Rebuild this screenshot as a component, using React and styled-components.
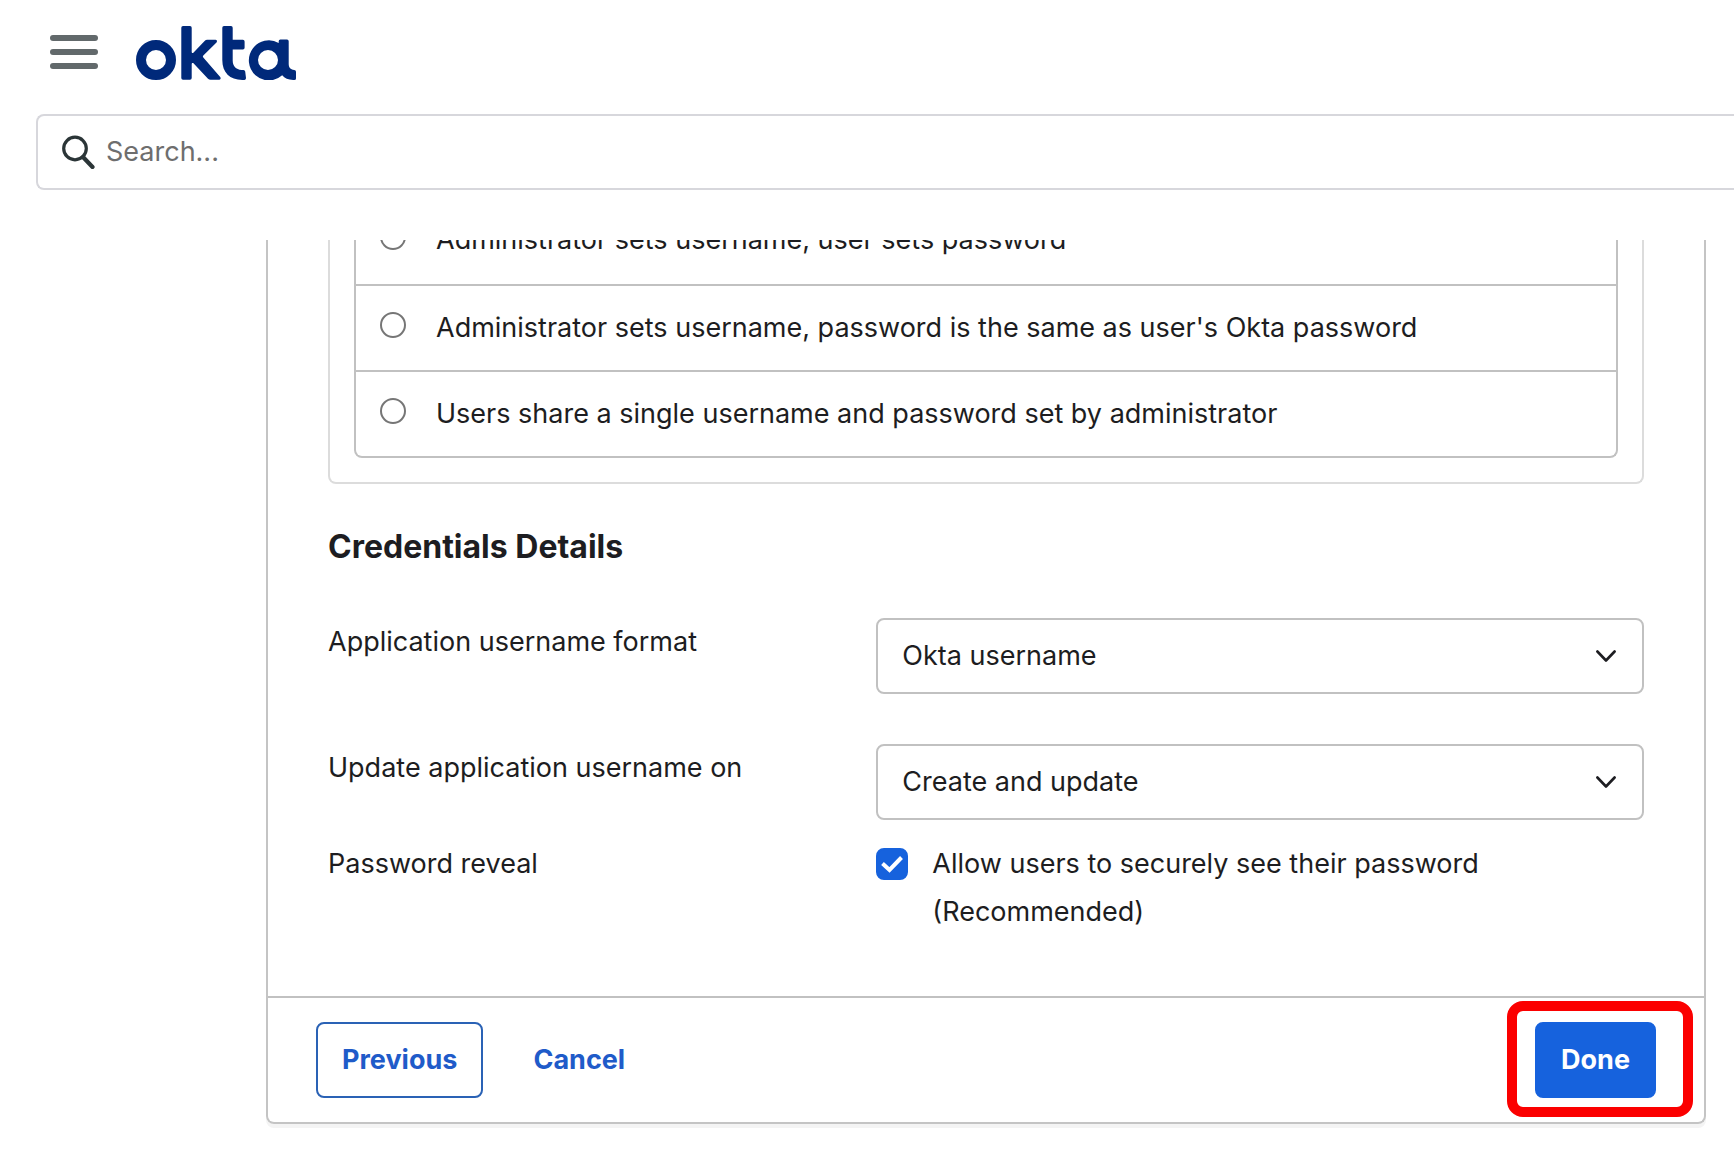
import React, { useState } from 'react';
import styled, { createGlobalStyle } from 'styled-components';

const GlobalStyle = createGlobalStyle`
  *,
  *::before,
  *::after {
    box-sizing: border-box;
  }

  body {
    margin: 0;
    background-color: #ffffff;
    color: #1d1d21;
    font-family: Inter, 'Liberation Sans', sans-serif;
    font-size: 27px;
    line-height: 48px;
  }

  button,
  input,
  select {
    font: inherit;
    color: inherit;
  }
`;

const TopBar = styled.header`
  display: flex;
  align-items: center;
  gap: 38px;
  padding: 26px 50px 34px;
`;

const MenuButton = styled.button`
  display: flex;
  padding: 0;
  border: none;
  background: none;
  cursor: pointer;
`;

const HomeLink = styled.a`
  display: flex;
`;

const SearchBar = styled.label`
  display: flex;
  align-items: center;
  gap: 11px;
  height: 76px;
  margin-left: 36px;
  padding-left: 24px;
  border: 2px solid #d7d7dc;
  border-right: none;
  border-radius: 8px 0 0 8px;
`;

const SearchInput = styled.input`
  flex: 1;
  min-width: 0;
  padding: 0;
  border: none;
  outline: none;
  background: none;

  &::placeholder {
    color: #6e6e6e;
    opacity: 1;
  }
`;

const ScrollArea = styled.main`
  margin-top: 50px;
  padding: 0 28px 40px 266px;
  overflow: hidden;
`;

const Panel = styled.form`
  margin-top: -42px;
  border: 2px solid #c4c4c4;
  border-top: none;
  border-radius: 0 0 8px 8px;
  box-shadow: 0 4px 0 #f4f4f4;
`;

const PanelBody = styled.div`
  padding: 0 60px 60px;
`;

const OptionGroup = styled.fieldset`
  margin: 0;
  padding: 0 24px 24px;
  border: 2px solid #dcdcdc;
  border-top: none;
  border-radius: 0 0 8px 8px;
`;

const OptionList = styled.div`
  border: 2px solid #c1c1c1;
  border-top: none;
  border-radius: 0 0 8px 8px;
`;

const Option = styled.label`
  display: flex;
  gap: 30px;
  padding: 18px 24px;

  &:first-child {
    padding-bottom: 20px;
  }

  & + & {
    border-top: 2px solid #c1c1c1;
  }
`;

const Radio = styled.input`
  appearance: none;
  flex: none;
  width: 26px;
  height: 26px;
  margin: 8px 0 0;
  border: 2px solid #767676;
  border-radius: 50%;
  background-color: #ffffff;

  &:checked {
    border-color: #1662dd;
    box-shadow: inset 0 0 0 4px #ffffff;
    background-color: #1662dd;
  }
`;

const SectionTitle = styled.h2`
  margin: 42px 0 50px;
  font-size: 32px;
  line-height: 42px;
  font-weight: 700;
`;

const Field = styled.div`
  display: grid;
  grid-template-columns: 5fr 7fr;
  align-items: start;
  margin-top: ${props => (props.$tight ? '20px' : '50px')};
`;

const SelectBox = styled.div`
  position: relative;

  svg {
    position: absolute;
    top: 32px;
    right: 28px;
    pointer-events: none;
  }
`;

const Select = styled.select`
  display: block;
  appearance: none;
  width: 100%;
  height: 76px;
  padding: 0 64px 0 24px;
  border: 2px solid #c1c1c1;
  border-radius: 8px;
  background-color: #ffffff;
`;

const CheckLabel = styled.label`
  display: flex;
  gap: 24px;
  padding-right: 140px;
`;

const CheckBox = styled.span`
  position: relative;
  flex: none;
  width: 32px;
  height: 32px;
  margin-top: 8px;

  svg {
    position: absolute;
    inset: 0;
    pointer-events: none;
  }
`;

const CheckInput = styled.input`
  display: block;
  appearance: none;
  width: 32px;
  height: 32px;
  margin: 0;
  border: 2px solid #8c8c96;
  border-radius: 8px;

  &:checked {
    border-color: #1662dd;
    background-color: #1662dd;
  }
`;

const Footer = styled.footer`
  display: flex;
  gap: 24px;
  padding: 24px 48px;
  border-top: 2px solid #c1c1c1;
`;

const Button = styled.button`
  height: 76px;
  padding: 0 24px;
  border: 2px solid transparent;
  border-radius: 8px;
  background-color: transparent;
  color: #1f5bc9;
  font-weight: 700;
  cursor: pointer;
`;

const OutlineButton = styled(Button)`
  border-color: #2a62b5;
`;

const PrimaryButton = styled(Button)`
  background-color: #1662dd;
  border-color: #1662dd;
  color: #ffffff;
`;

const Highlight = styled.div`
  position: relative;
  margin-left: auto;

  &::after {
    content: '';
    position: absolute;
    inset: -21px -37px -19px -28px;
    border: 10px solid #fb0000;
    border-radius: 16px;
    pointer-events: none;
  }
`;

const MenuIcon = () => (
  <svg width="48" height="36" viewBox="0 0 48 36" fill="#62696b" aria-hidden="true">
    <rect width="48" height="6" rx="3" />
    <rect y="14" width="48" height="6" rx="3" />
    <rect y="28" width="48" height="6" rx="3" />
  </svg>
);

const Logo = () => (
  <svg width="160" height="54" viewBox="0 0 160 54" fill="#00297a" role="img" aria-label="Okta">
    <circle cx="20" cy="34" r="15" fill="none" stroke="#00297a" strokeWidth="10" />
    <path d="M47 0h7q1.700 0 1.700 1.700v24c0 1.300 1 1.600 1.900 .7L68.600 15q1.100-1.200 2.700-1.200h8.200c1.500 0 2 1.600 1 2.600L67.300 29.600q-1 1 0 2L84.200 51c1 1.200.4 2.800-1.100 2.800h-8.500q-1.500 0-2.600-1.100L57.700 37.600c-.9-.9-2-.5-2 .8V52q0 1.800-1.700 1.800h-7q-1.700 0-1.700-1.800V1.700Q45.300 0 47 0z" />
    <path d="M88 0h7q1.700 0 1.700 1.700v12.100h10.200q1.700 0 1.700 1.700v6.300q0 1.700-1.700 1.700H96.700v11c0 5.600 3.300 9 8.800 9.500h2q1.500 0 1.700 1.500l.8 6.600q.2 1.800-1.500 1.800h-2.200C93.800 53.900 86.300 46.500 86.300 34V1.700Q86.300 0 88 0z" />
    <path d="M144.400 13.500h6.600q1.700 0 1.700 1.700v22.600c0 3.600 1.600 5.800 5.500 6.100q1.800.2 1.800 1.900v6.600q0 1.600-1.800 1.600c-5.600.1-9.400-1.400-12-4.700A20 20 0 1 1 142.700 17v-1.800q0-1.700 1.700-1.700zM132 24a10 10 0 1 0 0 20a10 10 0 0 0 0-20z" fillRule="evenodd" />
  </svg>
);

const SearchIcon = () => (
  <svg width="33" height="34" viewBox="0 0 33 34" fill="none" stroke="#2b3537" aria-hidden="true">
    <circle cx="13" cy="13.500" r="11.300" strokeWidth="3.200" />
    <path d="M21 22l9.500 10" strokeWidth="4.200" strokeLinecap="round" />
  </svg>
);

const ChevronIcon = () => (
  <svg width="20" height="13" viewBox="0 0 20 13" fill="none" stroke="#1d1d21" strokeWidth="2.600" strokeLinecap="round" strokeLinejoin="round" aria-hidden="true">
    <path d="M1.400 1.500L10 10.500l8.600-9" />
  </svg>
);

const CheckIcon = () => (
  <svg width="32" height="32" viewBox="0 0 32 32" fill="none" stroke="#ffffff" strokeWidth="4" aria-hidden="true">
    <path d="M6.500 15.500l7 6.500L25.500 9.500" />
  </svg>
);

const signOnOptions = [
  "Administrator sets username, user sets password",
  "Administrator sets username, password is the same as user's Okta password",
  "Users share a single username and password set by administrator"
];

const App = () => {
  const [signOn, setSignOn] = useState(null);
  const [reveal, setReveal] = useState(true);

  return (
    <>
      <GlobalStyle />
      <TopBar>
        <MenuButton type="button" aria-label="Menu">
          <MenuIcon />
        </MenuButton>
        <HomeLink href="#">
          <Logo />
        </HomeLink>
      </TopBar>

      <SearchBar>
        <SearchIcon />
        <SearchInput type="text" placeholder="Search..." aria-label="Search" />
      </SearchBar>

      <ScrollArea>
        <Panel onSubmit={e => e.preventDefault()}>
          <PanelBody>
            <OptionGroup>
              <OptionList>
                {signOnOptions.map((option, index) => (
                  <Option key={index}>
                    <Radio
                      type="radio"
                      name="signOn"
                      checked={signOn === index}
                      onChange={() => setSignOn(index)}
                    />
                    <span>{option}</span>
                  </Option>
                ))}
              </OptionList>
            </OptionGroup>

            <SectionTitle>Credentials Details</SectionTitle>

            <Field>
              <label htmlFor="username-format">Application username format</label>
              <SelectBox>
                <Select id="username-format">
                  <option>Okta username</option>
                </Select>
                <ChevronIcon />
              </SelectBox>
            </Field>

            <Field>
              <label htmlFor="update-on">Update application username on</label>
              <SelectBox>
                <Select id="update-on">
                  <option>Create and update</option>
                </Select>
                <ChevronIcon />
              </SelectBox>
            </Field>

            <Field $tight>
              <span>Password reveal</span>
              <CheckLabel>
                <CheckBox>
                  <CheckInput
                    type="checkbox"
                    checked={reveal}
                    onChange={e => setReveal(e.target.checked)}
                  />
                  {reveal && <CheckIcon />}
                </CheckBox>
                <span>Allow users to securely see their password (Recommended)</span>
              </CheckLabel>
            </Field>
          </PanelBody>

          <Footer>
            <OutlineButton type="button">Previous</OutlineButton>
            <Button type="button">Cancel</Button>
            <Highlight>
              <PrimaryButton type="submit">Done</PrimaryButton>
            </Highlight>
          </Footer>
        </Panel>
      </ScrollArea>
    </>
  );
};

export default App;
